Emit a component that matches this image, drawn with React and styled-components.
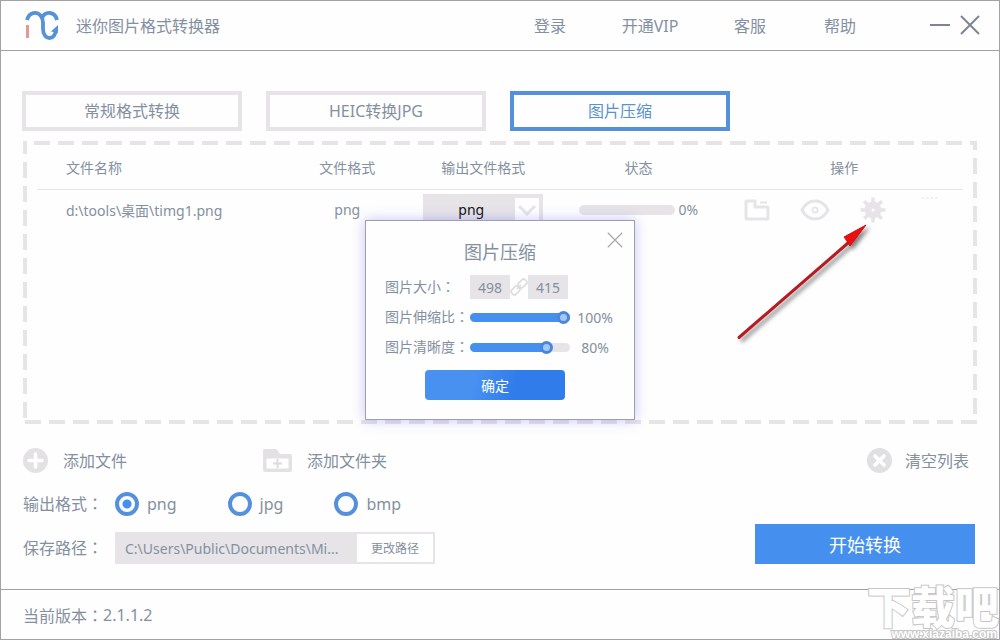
import React, { useState } from "react";
import styled, { createGlobalStyle, css } from "styled-components";

const ink = "#8490a0";
const pale = "#e6e4e7";
const blue = "#4590ee";
const ring = "#5590dc";
const line = "#a3a1a4";

const GlobalStyle = createGlobalStyle`
  * { box-sizing: border-box; }
  body { margin: 0; background: #fefefe; }
  body, button, input, select {
    font-family: "Noto Sans", "Noto Sans CJK SC", sans-serif;
    font-size: 16px;
    color: ${ink};
  }
  button, input, select { margin: 0; padding: 0; border: 0; border-radius: 0; background: none; }
  button { cursor: pointer; }
`;

const Window = styled.div`
  position: relative;
  display: flex;
  flex-direction: column;
  min-height: 100vh;
  border: 1px solid ${line};
  overflow: hidden;
`;

const Header = styled.header`
  display: flex;
  align-items: center;
  height: 50px;
  padding: 0 19px 2px 24px;
  border-bottom: 1px solid ${line};
`;

const Title = styled.h1`
  flex: 1;
  margin: 0 0 0 15px;
  font-size: 16px;
  font-weight: 400;
`;

const Nav = styled.nav`
  display: flex;
  margin-right: 50px;
`;

const NavButton = styled.button`
  width: ${(p) => (p.$narrow ? 80 : 100)}px;
  height: 40px;
`;

const IconButton = styled.button`
  display: flex;
  align-items: center;
  justify-content: center;
  flex: none;
`;

const WindowControls = styled.div`
  display: flex;
  gap: 10px;
`;

const Body = styled.main`
  flex: 1;
  display: flex;
  flex-direction: column;
  padding: 40px 21px 25px;
`;

const Tabs = styled.div`
  display: flex;
  gap: 24px;
`;

const Tab = styled.button`
  flex: 0 1 220px;
  height: 40px;
  padding-bottom: 2px;
  border: 4px solid ${(p) => (p.$active ? ring : pale)};
  color: ${(p) => (p.$active ? "#5a92cc" : ink)};
`;

const Panel = styled.section`
  position: relative;
  flex: 1;
  min-height: 283px;
  margin: 10px 1px 0;
  padding: 4px 14px;
  background:
    linear-gradient(90deg, ${pale} 16px, transparent 16px) 11px 0 / 24px 4px repeat-x,
    linear-gradient(90deg, ${pale} 16px, transparent 16px) 2px 100% / 24px 4px repeat-x,
    linear-gradient(${pale} 16px, transparent 16px) 0 -3px / 4px 24px repeat-y,
    linear-gradient(${pale} 16px, transparent 16px) 100% -7px / 4px 24px repeat-y;
`;

const Table = styled.table`
  width: 100%;
  table-layout: fixed;
  border-collapse: collapse;
  font-size: 14px;
`;

const Column = styled.col`
  width: ${(p) => p.$width};
`;

const HeadCell = styled.th`
  height: 44px;
  padding: ${(p) => (p.$first ? "0 0 0 29px" : p.$last ? "0 0 0 8px" : "0")};
  border-bottom: 1px solid ${pale};
  font-weight: 400;
  text-align: ${(p) => (p.$first ? "left" : "center")};
`;

const Cell = styled.td`
  height: 41px;
  padding: ${(p) => (p.$first ? "0 0 0 29px" : "0")};
  text-align: ${(p) => (p.$first ? "left" : "center")};
`;

const SelectBox = styled.div`
  display: flex;
  align-items: center;
  position: relative;
  width: 120px;
  height: 32px;
  margin: 0 auto;
  background: ${pale};
`;

const Select = styled.select`
  appearance: none;
  width: 100%;
  height: 32px;
  padding-left: 35px;
  font-size: 14px;
  color: #111;
`;

const SelectArrow = styled.span`
  position: absolute;
  right: 4px;
  top: 4px;
  display: flex;
  align-items: center;
  justify-content: center;
  width: 24px;
  height: 24px;
  background: #fff;
  pointer-events: none;
`;

const Status = styled.div`
  display: flex;
  align-items: center;
  justify-content: center;
  gap: 4px;
`;

const Bar = styled.div`
  width: 96px;
  height: 10px;
  border-radius: 5px;
  background: ${pale};
`;

const Operations = styled.div`
  display: flex;
  align-items: center;
  gap: 30px;
  padding-left: 26px;
`;

const MoreMark = styled.svg`
  align-self: flex-start;
  margin-left: 5px;
`;

const Pointer = styled.svg`
  position: absolute;
  right: 98px;
  top: 78px;
  pointer-events: none;
`;

const Actions = styled.div`
  display: flex;
  margin: 23px 9px 0 1px;
`;

const Action = styled.button`
  display: flex;
  align-items: center;
  gap: ${(p) => (p.$end ? 13 : 15)}px;
  height: 26px;
  margin-right: ${(p) => (p.$wide ? "136px" : "0")};
  margin-left: ${(p) => (p.$end ? "auto" : "0")};
`;

const Settings = styled.div`
  display: flex;
  align-items: flex-end;
  justify-content: space-between;
  gap: 24px;
  margin: 19px 3px 0 1px;
`;

const Options = styled.div`
  display: flex;
  flex-direction: column;
  gap: 16px;
`;

const OptionRow = styled.div`
  display: flex;
  align-items: center;
`;

const OptionName = styled.label`
  width: 92px;
  line-height: 24px;
`;

const Colon = styled.span`
  font-family: "Noto Sans CJK TC", sans-serif;
  line-height: 1;
`;

const Radios = styled.div`
  display: flex;
  gap: 51px;
`;

const RadioLabel = styled.label`
  display: flex;
  align-items: center;
  gap: 8px;
  height: 24px;
`;

const Radio = styled.input`
  appearance: none;
  width: 24px;
  height: 24px;
  margin: 0;
  border: 4px solid ${ring};
  border-radius: 50%;
  &:checked {
    background: radial-gradient(circle, ${blue} 4px, transparent 5px);
  }
`;

const PathBox = styled.div`
  display: flex;
  width: 320px;
  height: 32px;
  padding: 2px;
  background: ${pale};
`;

const PathInput = styled.input`
  flex: 1;
  min-width: 0;
  padding-left: 8px;
  font-size: 14px;
`;

const PathButton = styled.button`
  width: 76px;
  background: #fff;
  font-size: 12px;
`;

const StartButton = styled.button`
  flex: 0 1 220px;
  height: 40px;
  background: ${blue};
  color: #fff;
  font-size: 18px;
`;

const Footer = styled.footer`
  display: flex;
  align-items: center;
  height: 50px;
  padding-left: 22px;
  border-top: 1px solid ${line};
`;

const Watermark = styled.div`
  position: absolute;
  right: 0;
  bottom: 0;
  color: #fff;
  font-family: "Noto Sans CJK SC", sans-serif;
  font-weight: 900;
  text-align: right;
  white-space: nowrap;
  paint-order: stroke fill;
  -webkit-text-stroke: 2px #c6c6c6;
  pointer-events: none;
`;

const WatermarkName = styled.div`
  font-size: 44px;
  line-height: 48px;
`;

const WatermarkSite = styled.div`
  padding-right: 2px;
  font-family: "Liberation Sans", sans-serif;
  font-size: 12px;
  line-height: 10px;
`;

const Overlay = styled.div`
  position: absolute;
  inset: 0;
  display: grid;
  place-items: center;
  pointer-events: none;
`;

const Dialog = styled.div`
  position: relative;
  display: flex;
  flex-direction: column;
  width: 270px;
  height: 200px;
  padding: 16px 19px 19px;
  border: 1px solid #a29dae;
  background: #fefefe;
  box-shadow: 0 0 12px rgba(90, 90, 240, 0.35);
  font-size: 14px;
  pointer-events: auto;
`;

const DialogTitle = styled.h2`
  margin: 0 0 5px;
  font-size: 18px;
  line-height: 30px;
  font-weight: 400;
  text-align: center;
`;

const DialogClose = styled(IconButton)`
  position: absolute;
  right: 9px;
  top: 9px;
  width: 20px;
  height: 20px;
`;

const DialogRow = styled.div`
  display: flex;
  align-items: center;
  height: 30px;
`;

const DialogLabel = styled.label`
  flex: none;
  width: 85px;
  line-height: 20px;
  white-space: nowrap;
`;

const SizeInput = styled.input`
  width: 40px;
  height: 24px;
  background: ${pale};
  font-size: 14px;
  text-align: center;
`;

const thumb = css`
  appearance: none;
  width: 13px;
  height: 13px;
  border: 3px solid #4a86db;
  border-radius: 50%;
  background: #a3c8f8;
`;

const Slider = styled.input`
  appearance: none;
  flex: none;
  width: 100px;
  height: 9px;
  border-radius: 5px;
  background: linear-gradient(90deg, ${blue} ${(p) => p.value}%, ${pale} ${(p) => p.value}%);
  &::-webkit-slider-thumb { ${thumb} }
`;

const Percent = styled.output`
  flex: none;
  width: 50px;
  text-align: center;
`;

const Confirm = styled.button`
  align-self: center;
  width: 140px;
  height: 30px;
  margin: 8px 10px 0 0;
  border-radius: 4px;
  background: linear-gradient(100deg, #4891f1 35%, #2f7cea 65%);
  color: #fff;
  font-size: 14px;
`;

const Logo = () => (
  <svg width="36" height="32" viewBox="0 0 36 32" fill="none" aria-hidden="true">
    <path d="M2 11C4 3 12 2 16 7C17.500 9 18 11 18 14V20C18 32 31 32 31 20" stroke="#5592d8" strokeWidth="3.8" />
    <path d="M17 9C20 2 30 2 32 11" stroke="#5592d8" strokeWidth="3.8" />
    <path d="M33 16V24L26 22.500Z" fill="#5592d8" />
    <path d="M2.500 16V29" stroke="#de9c94" strokeWidth="3" />
  </svg>
);

const Cross = ({ size, color, weight }) => (
  <svg width={size} height={size} viewBox="0 0 20 20" fill="none" aria-hidden="true">
    <path d="M1 1L19 19M19 1L1 19" stroke={color} strokeWidth={weight} />
  </svg>
);

const FolderIcon = () => (
  <svg width="26" height="22" viewBox="0 0 26 22" fill="none" stroke={pale} strokeWidth="3" aria-hidden="true">
    <path d="M2 2H11V8H24V19Q24 20 23 20H3Q2 20 2 19Z" strokeLinejoin="round" />
    <path d="M16 3.5H23" strokeWidth="2" />
  </svg>
);

const EyeIcon = () => (
  <svg width="30" height="22" viewBox="0 0 30 22" fill="none" stroke={pale} aria-hidden="true">
    <path d="M2 11C8 -1 22 -1 28 11C22 23 8 23 2 11Z" strokeWidth="3" />
    <circle cx="15" cy="11" r="2.6" strokeWidth="1.6" />
  </svg>
);

const GearIcon = () => (
  <svg width="26" height="26" viewBox="0 0 26 26" fill="none" stroke={pale} aria-hidden="true">
    <circle cx="13" cy="13" r="5" strokeWidth="7" />
    <path
      d="M13 0.5V6M13 20V25.5M0.5 13H6M20 13H25.5M4.2 4.2L8 8M18 18L21.8 21.8M21.8 4.2L18 8M8 18L4.2 21.8"
      strokeWidth="3.6"
    />
  </svg>
);

const CircleIcon = ({ turned }) => (
  <svg width="25" height="25" viewBox="0 0 25 25" aria-hidden="true">
    <circle cx="12.5" cy="12.5" r="12.5" fill={turned ? "#e0dfe1" : "#e3e1e3"} />
    <path
      d={turned ? "M8 8L17 17M17 8L8 17" : "M12.5 6V19M6 12.5H19"}
      stroke="#fff"
      strokeWidth="3.6"
      strokeLinecap="round"
    />
  </svg>
);

const FolderAddIcon = () => (
  <svg width="29" height="23" viewBox="0 0 29 23" aria-hidden="true">
    <path d="M0 1Q0 0 1 0H13Q14 0 15 2L17 5H27Q29 5 29 7V21Q29 23 27 23H2Q0 23 0 21Z" fill="#e3e1e3" />
    <path d="M3.5 9.5H25.5V19.5H3.5Z" fill="#fff" />
    <path d="M14.5 10V19M10 14.5H19" stroke="#dddbdd" strokeWidth="2" />
  </svg>
);

const LinkIcon = () => (
  <svg width="18" height="18" viewBox="0 0 18 18" fill="none" stroke="#dddbdf" strokeWidth="1.6" aria-hidden="true">
    <rect x="-4.500" y="-3" width="9" height="6" rx="2" transform="translate(12.500 5.500) rotate(-45)" />
    <rect x="-4.500" y="-3" width="9" height="6" rx="2" transform="translate(5.500 12.500) rotate(-45)" />
    <path d="M7 11L11 7" />
  </svg>
);

const ArrowMark = () => (
  <Pointer width="144" height="126" viewBox="0 0 144 126" aria-hidden="true">
    <defs>
      <filter id="arrowShade" x="-10%" y="-10%" width="130%" height="130%">
        <feDropShadow dx="3" dy="3" stdDeviation="2" floodColor="#000" floodOpacity="0.5" />
      </filter>
    </defs>
    <g filter="url(#arrowShade)">
      <path d="M4 118.500L113 24" stroke="#b51f24" strokeWidth="3" strokeLinecap="round" />
      <path d="M131 6L109 18L112 22L115 27Z" fill="#f00a0a" stroke="#c01418" />
    </g>
  </Pointer>
);

export default function App() {
  const [scale, setScale] = useState(100);
  const [clarity, setClarity] = useState(80);
  const [format, setFormat] = useState("png");

  return (
    <>
      <GlobalStyle />
      <Window>
        <Header>
          <Logo />
          <Title>迷你图片格式转换器</Title>
          <Nav>
            <NavButton>登录</NavButton>
            <NavButton>开通VIP</NavButton>
            <NavButton>客服</NavButton>
            <NavButton $narrow>帮助</NavButton>
          </Nav>
          <WindowControls>
            <IconButton aria-label="最小化">
              <svg width="20" height="20" viewBox="0 0 20 20" aria-hidden="true">
                <path d="M0 10H20" stroke="#7d8595" strokeWidth="2" />
              </svg>
            </IconButton>
            <IconButton aria-label="关闭">
              <Cross size={20} color="#7d8595" weight={2} />
            </IconButton>
          </WindowControls>
        </Header>

        <Body>
          <Tabs>
            <Tab>常规格式转换</Tab>
            <Tab>HEIC转换JPG</Tab>
            <Tab $active>图片压缩</Tab>
          </Tabs>

          <Panel>
            <Table>
              <colgroup>
                <Column $width="27%" />
                <Column $width="13%" />
                <Column $width="16.4%" />
                <Column $width="17.1%" />
                <Column $width="26.5%" />
              </colgroup>
              <thead>
                <tr>
                  <HeadCell $first>文件名称</HeadCell>
                  <HeadCell>文件格式</HeadCell>
                  <HeadCell>输出文件格式</HeadCell>
                  <HeadCell>状态</HeadCell>
                  <HeadCell $last>操作</HeadCell>
                </tr>
              </thead>
              <tbody>
                <tr>
                  <Cell $first>d:\tools\桌面\timg1.png</Cell>
                  <Cell>png</Cell>
                  <Cell>
                    <SelectBox>
                      <Select aria-label="输出文件格式" defaultValue="png">
                        <option>png</option>
                        <option>jpg</option>
                        <option>bmp</option>
                      </Select>
                      <SelectArrow>
                        <svg width="18" height="12" viewBox="0 0 18 12" fill="none" aria-hidden="true">
                          <path d="M1 2L9 10L17 2" stroke={pale} strokeWidth="3" />
                        </svg>
                      </SelectArrow>
                    </SelectBox>
                  </Cell>
                  <Cell>
                    <Status>
                      <Bar />
                      0%
                    </Status>
                  </Cell>
                  <Cell>
                    <Operations>
                      <IconButton aria-label="打开文件夹"><FolderIcon /></IconButton>
                      <IconButton aria-label="预览"><EyeIcon /></IconButton>
                      <IconButton aria-label="设置"><GearIcon /></IconButton>
                      <MoreMark width="17" height="2" viewBox="0 0 17 2" aria-hidden="true">
                        <path d="M0 1H17" stroke={pale} strokeDasharray="3 1.600" />
                      </MoreMark>
                    </Operations>
                  </Cell>
                </tr>
              </tbody>
            </Table>
            <ArrowMark />
          </Panel>

          <Actions>
            <Action $wide><CircleIcon />添加文件</Action>
            <Action><FolderAddIcon />添加文件夹</Action>
            <Action $end><CircleIcon turned />清空列表</Action>
          </Actions>

          <Settings>
            <Options>
              <OptionRow role="radiogroup" aria-labelledby="formatName">
                <OptionName as="span" id="formatName">输出格式<Colon>：</Colon></OptionName>
                <Radios>
                  {["png", "jpg", "bmp"].map((name) => (
                    <RadioLabel key={name}>
                      <Radio
                        type="radio"
                        name="format"
                        checked={format === name}
                        onChange={() => setFormat(name)}
                      />
                      {name}
                    </RadioLabel>
                  ))}
                </Radios>
              </OptionRow>
              <OptionRow>
                <OptionName htmlFor="path">保存路径<Colon>：</Colon></OptionName>
                <PathBox>
                  <PathInput id="path" readOnly value="C:\Users\Public\Documents\Mi..." />
                  <PathButton>更改路径</PathButton>
                </PathBox>
              </OptionRow>
            </Options>
            <StartButton>开始转换</StartButton>
          </Settings>
        </Body>

        <Footer>当前版本<Colon>：</Colon>2.1.1.2</Footer>

        <Watermark>
          <WatermarkName>下载吧</WatermarkName>
          <WatermarkSite>www.xiazaiba.com</WatermarkSite>
        </Watermark>

        <Overlay>
          <Dialog role="dialog" aria-labelledby="dialogTitle">
            <DialogTitle id="dialogTitle">图片压缩</DialogTitle>
            <DialogClose aria-label="关闭"><Cross size={16} color="#aaa9ad" weight={1.6} /></DialogClose>
            <DialogRow>
              <DialogLabel htmlFor="imageWidth">图片大小<Colon>：</Colon></DialogLabel>
              <SizeInput id="imageWidth" defaultValue="498" />
              <LinkIcon />
              <SizeInput aria-label="图片高度" defaultValue="415" />
            </DialogRow>
            <DialogRow>
              <DialogLabel htmlFor="scale">图片伸缩比<Colon>：</Colon></DialogLabel>
              <Slider id="scale" type="range" value={scale} onChange={(e) => setScale(e.target.value)} />
              <Percent htmlFor="scale">{scale}%</Percent>
            </DialogRow>
            <DialogRow>
              <DialogLabel htmlFor="clarity">图片清晰度<Colon>：</Colon></DialogLabel>
              <Slider id="clarity" type="range" value={clarity} onChange={(e) => setClarity(e.target.value)} />
              <Percent htmlFor="clarity">{clarity}%</Percent>
            </DialogRow>
            <Confirm>确定</Confirm>
          </Dialog>
        </Overlay>
      </Window>
    </>
  );
}
